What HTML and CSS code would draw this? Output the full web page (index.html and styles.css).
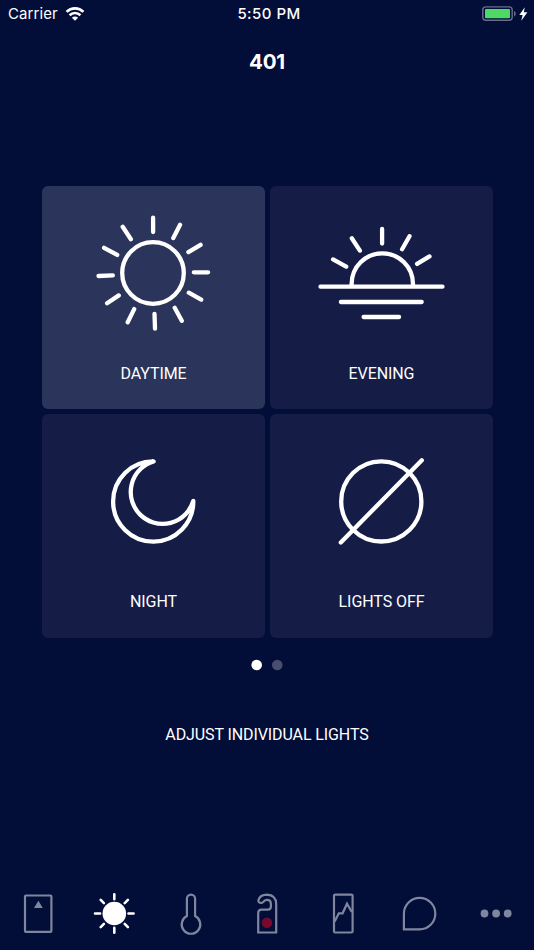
FILE: index.html
```html
<!DOCTYPE html>
<html lang="en">
<head>
<meta charset="utf-8">
<title>401</title>
<link rel="stylesheet" href="styles.css">
</head>
<body>
<div class="screen">
  <header class="status">
    <div class="carrier"><span>Carrier</span>
      <svg width="20" height="16" viewBox="0 0 20 16" fill="none" stroke="#fff" stroke-width="2.7">
        <path d="M1.6 5.9A12 12 0 0 1 18.4 5.9M4.6 9.2A7.7 7.7 0 0 1 15.4 9.2"/>
        <path d="M10 14.8L6.9 11.7A4.4 4.4 0 0 1 13.1 11.7Z" fill="#fff" stroke="none"/>
      </svg>
    </div>
    <div class="time">5:50 PM</div>
    <div class="power">
      <svg width="48" height="16" viewBox="481 5.5 48 16">
        <rect x="482.8" y="6.4" width="29.4" height="13.4" rx="3" fill="none" stroke="#686e89" stroke-width="1.4"/>
        <rect x="485" y="8.5" width="25" height="9.3" rx="1" fill="#4cd964"/>
        <path d="M514 10.2Q517.6 13.2 514 16.2Z" fill="#686e89"/>
        <path d="M524.8 6.7L519.3 14.5H522.6L521.3 20.2L527.4 11.7H523.8Z" fill="#fff"/>
      </svg>
    </div>
  </header>
  <h1 class="title">401</h1>

  <main class="scenes">
    <button class="tile active">
      <svg class="art" viewBox="41.7 186 223 160">
        <circle cx="152.7" cy="273" r="30.8"/>
        <path d="M152.8 217.7V232M179.8 224.8L173 238M200.3 244.8L188.1 252.2M207.8 272.3H193.5M200.9 299.6L188.5 292.7M181.5 320.8L174.4 307.8M154.7 328.6L154.2 313.9M127.4 322.2L133.9 309.1M106.8 303.2L118.5 295.4M98.2 276L112.5 275.4M103.8 247.8L116.9 254.9M122.4 226.8L130.6 239.2"/>
      </svg>
      <span class="label">DAYTIME</span>
    </button>
    <button class="tile">
      <svg class="art" viewBox="269.7 186 223 160">
        <path d="M351.3 286V284A30.7 30.7 0 0 1 412.7 284V286M381.8 229V243.6M409.2 236.2L401.8 249.2M429.2 256.4L416.8 263.9M351.5 238.2L359.6 250.6M332.8 259.4L345.9 266.6M320.2 286.7H442.2M340.6 302H421.4M363.3 317H398.8"/>
      </svg>
      <span class="label">EVENING</span>
    </button>
    <button class="tile">
      <svg class="art" viewBox="41.7 414 223 160">
        <path d="M153.3 461.4A40.1 40.1 0 1 0 193 500.8A31.9 31.9 0 1 1 153.3 461.4Z"/>
      </svg>
      <span class="label">NIGHT</span>
    </button>
    <button class="tile">
      <svg class="art" viewBox="269.7 414 223 160">
        <circle cx="381" cy="501.4" r="40.1"/>
        <path d="M421.5 460.3L340.5 542.4"/>
      </svg>
      <span class="label">LIGHTS OFF</span>
    </button>
  </main>

  <svg class="pager" width="32" height="12" viewBox="251 658.5 32 12">
    <circle cx="256.7" cy="664.5" r="5.3" fill="#fff"/>
    <circle cx="277.3" cy="664.5" r="5.3" fill="#484e70"/>
  </svg>
  <button class="adjust">ADJUST INDIVIDUAL LIGHTS</button>

  <nav class="tabs">
    <svg viewBox="-24 -24 48 48"><rect x="-13" y="-18" width="26.4" height="36.4" rx="1"/><path class="solid" d="M.4 -12.8L4.8 -5.4H-4Z"/></svg>
    <svg class="on" viewBox="-24 -24 48 48"><circle class="solid" cx=".3" r="11.8"/><path d="M.3 -19.3V-14.2M.3 19.3V14.2M-19 0H-13.9M19.6 0H14.5M-13.3 -13.6L-10.1 -10.4M13.9 -13.6L10.7 -10.4M-13.3 13.6L-10.1 10.4M13.9 13.6L10.7 10.4"/></svg>
    <svg viewBox="-24 -24 48 48"><path d="M-4.1 2.6V-14.8A4.1 4.1 0 0 1 4.1 -14.8V2.6A9.3 9.3 0 1 1 -4.1 2.6Z"/></svg>
    <svg viewBox="-24 -24 48 48"><path d="M-8.8 19V-.5Q-8.8 -3.9 -5.4 -3.9H.8Q3.9 -3.9 3.9 -7V-9.3Q3.9 -13.6 0 -13.6C-3.1 -13.6 -3.8 -10.5 -5.8 -10.5Q-8.8 -10.7 -8.6 -13.2C-7.6 -16.7 -4.2 -18.8 0 -18.8Q9.2 -18.3 9.2 -9.3V19Z"/><circle class="alert" cx="0" cy="9.2" r="5.3"/></svg>
    <svg viewBox="-24 -24 48 48"><rect x="-9" y="-18.9" width="18.6" height="37.9" rx="1.2"/><path d="M-8.3 8L-4.2 -.2H-.4L4 -9.8L8.8 -1.5"/></svg>
    <svg viewBox="-24 -24 48 48"><path d="M-16.1 15.8V0A15.7 15.7 0 1 1 -.4 15.8Z"/></svg>
    <svg viewBox="-24 -24 48 48"><g class="solid"><circle cx="-11.5" r="3.9"/><circle cx=".1" r="3.9"/><circle cx="11.7" r="3.9"/></g></svg>
  </nav>
</div>
</body>
</html>
```
FILE: styles.css
```css
* { box-sizing: border-box; }
body { margin: 0; background: #020d38; }
button { border: 0; padding: 0; background: none; color: inherit; font: inherit; }
.screen {
  width: 534px; height: 950px; background: #020d38; color: #fff;
  display: flex; flex-direction: column; align-items: center;
  font-family: Roboto, "Liberation Sans", sans-serif; font-size: 16px;
}
.status {
  width: 100%; height: 27px; padding: 0 5px 0 8px;
  display: grid; grid-template-columns: 1fr auto 1fr; align-items: center;
  font-family: Inter, sans-serif; font-size: 15px; line-height: 27px;
}
.carrier { display: flex; align-items: center; gap: 7px; letter-spacing: .08px; }
.time { font-weight: 500; letter-spacing: .45px; padding-left: 1px; }
.power { display: flex; justify-content: flex-end; }
.title {
  margin: 20px 0 0; height: 30px; line-height: 30px;
  font-family: Inter, sans-serif; font-size: 20.5px; font-weight: 700; letter-spacing: -.1px;
}
.scenes {
  margin: 109px 0 0 1px; display: grid; gap: 5px;
  grid-template: 223px 224px / repeat(2, 223px);
}
.tile {
  background: #151d47; border-radius: 6px;
  display: flex; flex-direction: column; align-items: center;
}
.tile.active { background: #2b345a; }
.art {
  width: 223px; height: 160px; fill: none; stroke: #fff;
  stroke-width: 4.3; stroke-linecap: round; stroke-linejoin: round;
}
.label { margin-top: 18px; line-height: 20px; white-space: nowrap; letter-spacing: -.08px; }
.pager { margin-top: 20.5px; }
.adjust { margin-top: 54px; line-height: 20px; white-space: nowrap; letter-spacing: -.1px; }
.tabs {
  width: 100%; margin-top: auto; margin-bottom: 13px;
  display: grid; grid-template-columns: repeat(7, 1fr); justify-items: center;
}
.tabs svg { width: 48px; height: 48px; fill: none; stroke: #80869e; stroke-width: 2.2; transform: translateY(.5px); }
.tabs .on { stroke: #fff; stroke-width: 2.6; stroke-linecap: round; }
.tabs .solid { fill: #80869e; stroke: none; }
.tabs .on .solid { fill: #fff; }
.tabs .alert { fill: #760a2e; stroke: none; }
```
